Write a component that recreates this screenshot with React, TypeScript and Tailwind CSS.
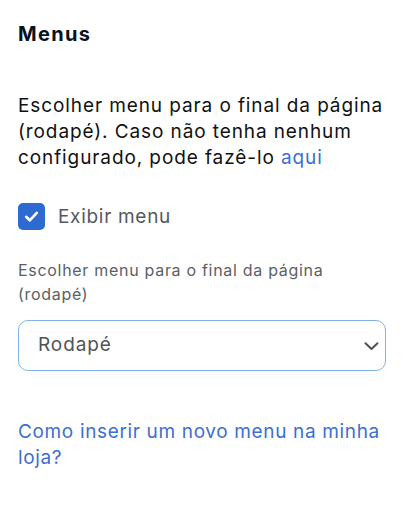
import React from "react";

export default function App() {
  return (
    <div
      className="w-[404px] h-[517px] bg-white px-[18px] pt-[21px] whitespace-nowrap"
      style={{ fontFamily: "Inter, 'Noto Sans', sans-serif" }}
    >
      <h2 className="text-[20px] font-bold leading-[26px] tracking-[1.3px] text-[#0a1220]">Menus</h2>
      <p className="mt-[46px] text-[19px] leading-[26px] tracking-[0.9px] text-[#111111]">
        Escolher menu para o final da página
        <br />
        (rodapé). Caso não tenha nenhum
        <br />
        configurado, pode fazê-lo <a className="text-[#3b6fd1]">aqui</a>
      </p>
      <label className="mt-[32px] flex items-center gap-[13px]">
        <span className="w-[27px] h-[27px] rounded-[5px] bg-[#2e6bd0] flex items-center justify-center">
          <svg width="17" height="17" viewBox="0 0 16 16" fill="none">
            <path d="M3 8.3 L6.4 11.6 L13 4.6" stroke="white" strokeWidth="2.5" strokeLinecap="round" strokeLinejoin="round" />
          </svg>
        </span>
        <span className="text-[19px] leading-[26px] tracking-[0.7px] text-[#55595e]">Exibir menu</span>
      </label>
      <div className="mt-[28px] text-[16px] leading-[24px] tracking-[0.7px] text-[#5c6065]">
        Escolher menu para o final da página
        <br />
        (rodapé)
      </div>
      <div className="mt-[14px] h-[51px] rounded-[10px] border border-[#7fb3e8] flex items-center justify-between pl-[19px] pr-[6px]">
        <span className="text-[19px] tracking-[0.9px] text-[#4f5358]">Rodapé</span>
        <svg width="16" height="16" viewBox="0 0 16 16" fill="none">
          <path d="M2.5 5.3 L8.5 11 L14.5 5.3" stroke="#4f5358" strokeWidth="2" strokeLinecap="round" strokeLinejoin="round" />
        </svg>
      </div>
      <a className="block mt-[48px] text-[19px] leading-[26px] tracking-[0.65px] text-[#3b6fd1]">
        Como inserir um novo menu na minha
        <br />
        loja?
      </a>
    </div>
  );
}
